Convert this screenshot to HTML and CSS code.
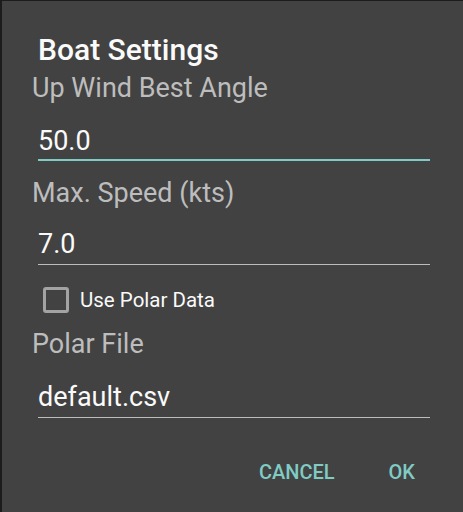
FILE: index.html
```html
<!DOCTYPE html>
<html lang="en">
<head>
    <meta charset="UTF-8">
    <title>Boat Settings</title>
    <link rel="stylesheet" href="styles.css">
</head>
<body>
<div class="dialog">
    <h3 class="title">Boat Settings</h3>
    <div class="field">
        <label class="label" for="angle">Up Wind Best Angle</label>
        <input type="text" id="angle" class="value focused" value="50.0">
    </div>
    <div class="field">
        <label class="label" for="speed">Max. Speed (kts)</label>
        <input type="text" id="speed" class="value" value="7.0">
    </div>
    <label class="check">
        <span class="box"></span>
        Use Polar Data
    </label>
    <div class="field">
        <label class="label" for="polar">Polar File</label>
        <input type="text" id="polar" class="value" value="default.csv">
    </div>
    <div class="actions">
        <button>CANCEL</button>
        <button>OK</button>
    </div>
</div>
</body>
</html>
```

FILE: styles.css
```css
body{
    margin: 0;
    background: #1c1c1c;
    font-family: Roboto, "Liberation Sans", sans-serif;
    height: 512px;
    overflow: hidden;
}
.dialog{
    background: #424242;
    margin: 1px 0 0 2px;
    height: 511px;
    padding: 0 0 0 29px;
}
.title{
    margin: 0;
    padding: 31px 0 0 7px;
    font-size: 30px;
    font-weight: 500;
    line-height: 36px;
    color: #fafafa;
}
.field{
    display: flex;
    flex-direction: column;
}
.label{
    font-size: 27px;
    line-height: 32px;
    color: #bdbdbd;
    margin: 4px 0 0 1px;
}
.value{
    margin: 21px 0 0 7px;
    width: 392px;
    height: 32px;
    padding: 0 0 4px 0;
    box-sizing: content-box;
    border: none;
    border-bottom: 1px solid #bdbdbd;
    background: transparent;
    color: #fafafa;
    font-family: inherit;
    font-size: 27px;
    line-height: 32px;
    outline: none;
}
.value.focused{
    padding-bottom: 2px;
    border-bottom: 2px solid #80cbc4;
}
.field + .field .label{
    margin-top: 16px;
}
.field + .field .value{
    margin-top: 19px;
}
.check{
    display: flex;
    align-items: center;
    gap: 11px;
    margin: 22px 0 0 12px;
    font-size: 20.5px;
    color: #fafafa;
}
.box{
    width: 20px;
    height: 20px;
    border: 3px solid #a3a3a3;
    border-radius: 3px;
}
.check + .field .label{
    margin-top: 15px;
}
.actions{
    display: flex;
    justify-content: flex-end;
    gap: 54px;
    margin-top: 42px;
    padding-right: 48px;
}
.actions button{
    background: none;
    border: none;
    padding: 0;
    font-family: inherit;
    font-size: 20px;
    font-weight: 500;
    line-height: 24px;
    color: #80cbc4;
}
```
